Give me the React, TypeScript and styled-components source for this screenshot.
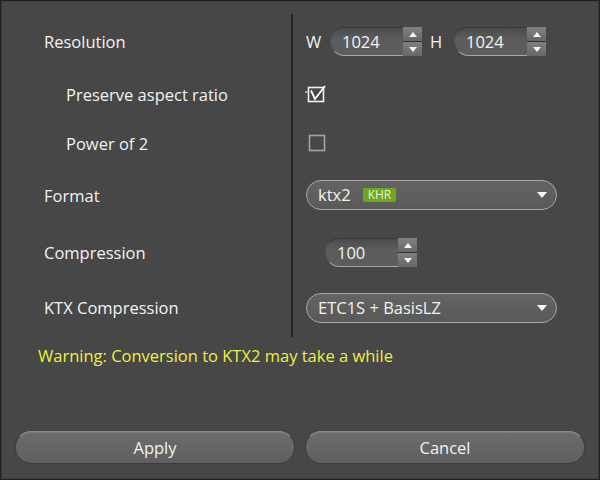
import React from "react";
import styled, { createGlobalStyle } from "styled-components";

const Global = createGlobalStyle`
  html, body { margin: 0; padding: 0; background: #474747; }
  #root { width: 600px; height: 480px; }
  * { box-sizing: border-box; }
`;

const Window = styled.div`
  width: 600px;
  height: 480px;
  background: #474747;
  border: 1px solid #1f1f1f;
  box-shadow: inset 1px 1px 0 #3c3c3c, inset -1px -1px 0 #3a3a3a;
  font-family: "Open Sans", "Noto Sans", sans-serif;
  font-size: 16.5px;
  color: #f2f2f2;
  display: flex;
  flex-direction: column;
  padding-top: 13px;
`;

const Form = styled.div`
  display: flex;
  flex-direction: column;
`;

const Row = styled.div<{ $h: number }>`
  display: grid;
  grid-template-columns: 290px 1fr;
  height: ${(p) => p.$h}px;
`;

const Label = styled.div<{ $indent?: boolean }>`
  display: flex;
  align-items: center;
  padding-left: ${(p) => (p.$indent ? 65 : 43)}px;
  padding-bottom: 1px;
`;

const Cell = styled.div<{ $pl?: number; $pb?: number }>`
  border-left: 2px solid #252525;
  display: flex;
  align-items: center;
  gap: 8px;
  padding-left: ${(p) => p.$pl ?? 13}px;
  padding-bottom: ${(p) => p.$pb ?? 0}px;
`;

const Axis = styled.span`
  width: 16px;
`;

const Spin = styled.div`
  display: inline-flex;
  height: 29px;
`;

const SpinField = styled.div`
  width: 73px;
  height: 29px;
  border-radius: 15px 0 0 15px;
  background: linear-gradient(#4b4b4b, #5c5c5c 40%, #5d5d5d);
  border-top: 1px solid #3a3a3a;
  border-left: 1px solid #505050;
  border-bottom: 1px solid #a6a6a6;
  display: flex;
  align-items: center;
  padding-left: 11px;
  padding-bottom: 1px;
`;

const SpinArrows = styled.div`
  width: 19px;
  display: flex;
  flex-direction: column;
  gap: 1px;
  background: #2f2f2f;
`;

const SpinBtn = styled.div`
  flex: 1;
  background: linear-gradient(#808080, #676767);
  display: flex;
  align-items: center;
  justify-content: center;
`;

const Tri = ({ up }: { up?: boolean }) => (
  <svg width="10" height="7" viewBox="0 0 10 7">
    <polygon points={up ? "1,6 9,6 5,1" : "1,1 9,1 5,6"} fill="#f4f4f4" />
  </svg>
);

const SpinBox = ({ value }: { value: string }) => (
  <Spin>
    <SpinField>{value}</SpinField>
    <SpinArrows>
      <SpinBtn>
        <Tri up />
      </SpinBtn>
      <SpinBtn>
        <Tri />
      </SpinBtn>
    </SpinArrows>
  </Spin>
);

const Combo = styled.div`
  width: 251px;
  height: 30px;
  border-radius: 15px;
  border: 1px solid #a9a9a9;
  background: linear-gradient(#646464, #595959);
  display: flex;
  align-items: center;
  padding: 0 8px 1px 11px;
  gap: 9px;
`;

const ComboText = styled.span`
  flex: 1;
  display: flex;
  align-items: center;
  gap: 12px;
`;

const Badge = styled.span`
  background: #6ea81d;
  color: #e6f4cf;
  font-size: 12px;
  border-radius: 2px;
  padding: 0 5px;
  height: 14px;
  line-height: 14px;
`;

const DropArrow = () => (
  <svg width="12" height="8" viewBox="0 0 12 8">
    <polygon points="1,1 11,1 6,7" fill="#f8f8f8" />
  </svg>
);

const CheckSvg = ({ checked }: { checked?: boolean }) =>
  checked ? (
    <svg width="26" height="20" viewBox="0 0 26 20" style={{ marginLeft: -4 }}>
      <rect x="4.5" y="4.5" width="15" height="14" fill="none" stroke="#f0f0f0" strokeWidth="1.6" />
      <line x1="1" y1="9" x2="4.5" y2="9" stroke="#bdbdbd" strokeWidth="1.5" />
      <polyline points="7,7.5 11,16 21,3" fill="none" stroke="#ffffff" strokeWidth="1.8" />
    </svg>
  ) : (
    <svg width="18" height="18" viewBox="0 0 18 18">
      <rect x="1.5" y="1.5" width="15" height="15" fill="none" stroke="#a4a4a4" strokeWidth="1.6" />
    </svg>
  );

const Warning = styled.div`
  color: #efef3c;
  padding-left: 37px;
  margin-top: 8px;
  height: 22px;
  line-height: 22px;
`;

const Footer = styled.div`
  margin-top: auto;
  padding: 0 14px 15px 14px;
  display: grid;
  grid-template-columns: 1fr 1fr;
  gap: 10px;
`;

const Button = styled.div`
  height: 33px;
  border-radius: 16px;
  background: linear-gradient(#6d6d6d, #5e5e5e);
  border: 1px solid #3c3c3c;
  border-top-color: #8c8c8c;
  box-shadow: inset 0 1px 0 #7b7b7b;
  display: flex;
  align-items: center;
  justify-content: center;
  padding-bottom: 1px;
`;

export default function App() {
  return (
    <>
      <Global />
      <Window>
        <Form>
          <Row $h={55}>
            <Label>Resolution</Label>
            <Cell>
              <Axis>W</Axis>
              <SpinBox value="1024" />
              <Axis>H</Axis>
              <SpinBox value="1024" />
            </Cell>
          </Row>
          <Row $h={52}>
            <Label $indent>Preserve aspect ratio</Label>
            <Cell $pl={15} $pb={4}>
              <CheckSvg checked />
            </Cell>
          </Row>
          <Row $h={45}>
            <Label $indent>Power of 2</Label>
            <Cell $pl={15} $pb={2}>
              <CheckSvg />
            </Cell>
          </Row>
          <Row $h={60}>
            <Label>Format</Label>
            <Cell $pb={2}>
              <Combo>
                <ComboText>
                  ktx2 <Badge>KHR</Badge>
                </ComboText>
                <DropArrow />
              </Combo>
            </Cell>
          </Row>
          <Row $h={53}>
            <Label>Compression</Label>
            <Cell $pl={32}>
              <SpinBox value="100" />
            </Cell>
          </Row>
          <Row $h={58}>
            <Label>KTX Compression</Label>
            <Cell>
              <Combo>
                <ComboText>ETC1S + BasisLZ</ComboText>
                <DropArrow />
              </Combo>
            </Cell>
          </Row>
        </Form>
        <Warning>Warning: Conversion to KTX2 may take a while</Warning>
        <Footer>
          <Button>Apply</Button>
          <Button>Cancel</Button>
        </Footer>
      </Window>
    </>
  );
}
